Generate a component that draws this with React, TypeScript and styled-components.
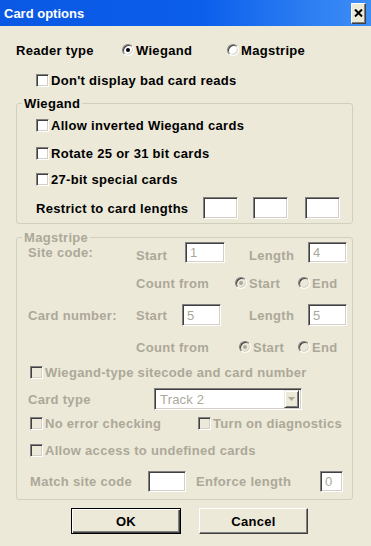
import React from 'react';
import styled, { createGlobalStyle } from 'styled-components';

const Global = createGlobalStyle`
  html, body { margin: 0; padding: 0; background: #ECE9D8; }
  * { box-sizing: border-box; }
`;

const FACE = '#ECE9D8';
const GRAY = '#ACA899';

const Dialog = styled.div`
  width: 371px;
  height: 546px;
  background: ${FACE};
  display: flex;
  flex-direction: column;
  overflow: hidden;
  font: bold 13px "Liberation Sans", Arial, sans-serif;
  letter-spacing: 0.3px;
  color: #000;
`;

const TitleBar = styled.div`
  height: 26px;
  flex: none;
  display: flex;
  align-items: center;
  justify-content: space-between;
  padding: 0 5px 0 4px;
  background: linear-gradient(90deg, #0A58E4 0%, #0C5FEB 55%, #2F80F2 85%, #3D8EF6 100%);
  color: #fff;
  letter-spacing: 0;
`;

const Title = styled.span`
  font: bold 13px "Liberation Sans", Arial, sans-serif;
`;

const CloseBtn = styled.div`
  width: 15px;
  height: 21px;
  background: ${FACE};
  border: 1px solid;
  border-color: #fff #404040 #404040 #fff;
  box-shadow: inset -1px -1px #808080;
  display: flex;
  align-items: center;
  justify-content: center;
`;

const Body = styled.div`
  display: flex;
  flex-direction: column;
`;

const Row = styled.div<{ $h: number; $mt?: number; $pl?: number }>`
  display: flex;
  align-items: center;
  height: ${p => p.$h}px;
  margin-top: ${p => p.$mt ?? 0}px;
  padding-left: ${p => p.$pl ?? 0}px;
  flex: none;
`;

const Cell = styled.div<{ $w?: number; $dim?: boolean; $dy?: number }>`
  display: flex;
  align-items: center;
  flex: none;
  ${p => (p.$w ? `width: ${p.$w}px;` : '')}
  ${p => (p.$dy ? `padding-top: ${p.$dy}px;` : '')}
  color: ${p => (p.$dim ? GRAY : '#000')};
  white-space: nowrap;
`;

const Group = styled.div<{ $mt: number; $h: number; $pl: number; $pt: number }>`
  position: relative;
  margin: ${p => p.$mt}px 0 0 16px;
  width: 337px;
  height: ${p => p.$h}px;
  border: 1px solid #D0D0BF;
  border-radius: 3px;
  padding: ${p => p.$pt}px 0 0 ${p => p.$pl}px;
  display: flex;
  flex-direction: column;
  flex: none;
`;

const Legend = styled.span<{ $dim?: boolean }>`
  position: absolute;
  top: -8px;
  left: 5px;
  padding: 0 2px;
  background: ${FACE};
  color: ${p => (p.$dim ? GRAY : '#000')};
  line-height: 15px;
`;

const Box = styled.span<{ $dim?: boolean }>`
  width: 13px;
  height: 13px;
  flex: none;
  margin-right: 2px;
  border: 1px solid;
  border-color: #808080 #fff #fff #808080;
  box-shadow: inset 1px 1px #404040, inset -1px -1px #D4D0C8;
  background: ${p => (p.$dim ? FACE : '#fff')};
`;

const Round = styled.span<{ $dim?: boolean; $on?: boolean }>`
  width: 12px;
  height: 12px;
  flex: none;
  margin-right: 2px;
  border-radius: 50%;
  border: 1px solid;
  border-color: #808080 #fff #fff #808080;
  box-shadow: inset 1px 1px #404040, inset -1px -1px #D4D0C8;
  background: ${p => (p.$dim ? FACE : '#fff')};
  display: flex;
  align-items: center;
  justify-content: center;
  &::after {
    content: '';
    width: 4px;
    height: 4px;
    border-radius: 50%;
    background: ${p => (p.$on ? (p.$dim ? GRAY : '#000') : 'transparent')};
  }
`;

const Field = styled.div<{ $w: number; $h: number; $dim?: boolean; $ml?: number }>`
  width: ${p => p.$w}px;
  height: ${p => p.$h}px;
  flex: none;
  margin-left: ${p => p.$ml ?? 0}px;
  border: 1px solid;
  border-color: #808080 #fff #fff #808080;
  box-shadow: inset 1px 1px #404040, inset -1px -1px #D4D0C8;
  background: #fff;
  color: ${GRAY};
  font-weight: normal;
  letter-spacing: 0;
  padding-left: 4px;
  display: flex;
  align-items: center;
`;

const Select = styled.div`
  width: 148px;
  height: 22px;
  flex: none;
  border: 1px solid;
  border-color: #808080 #fff #fff #808080;
  box-shadow: inset 1px 1px #404040, inset -1px -1px #D4D0C8;
  background: #fff;
  color: ${GRAY};
  font-weight: normal;
  letter-spacing: 0.2px;
  display: flex;
  align-items: center;
  justify-content: space-between;
  padding: 2px 2px 2px 5px;
`;

const DropBtn = styled.span`
  width: 15px;
  height: 18px;
  background: ${FACE};
  border: 1px solid;
  border-color: ${FACE} #404040 #404040 ${FACE};
  box-shadow: inset 1px 1px #fff, inset -1px -1px #808080;
  display: flex;
  align-items: center;
  justify-content: center;
`;

const ButtonRow = styled.div`
  display: flex;
  margin: 8px 0 0 71px;
  gap: 18px;
`;

const Button = styled.div<{ $def?: boolean; $w: number }>`
  width: ${p => p.$w}px;
  height: 26px;
  background: ${FACE};
  display: flex;
  align-items: center;
  justify-content: center;
  border: 1px solid;
  border-color: ${p => (p.$def ? '#000' : '#fff #404040 #404040 #fff')};
  box-shadow: ${p =>
    p.$def
      ? 'inset 1px 1px #fff, inset -1px -1px #404040, inset -2px -2px #808080'
      : 'inset -1px -1px #808080'};
`;

const Check = ({ label, dim }: { label: string; dim?: boolean }) => (
  <Cell $dim={dim}>
    <Box $dim={dim} />
    {label}
  </Cell>
);

const Radio = ({ label, dim, on, w }: { label: string; dim?: boolean; on?: boolean; w?: number }) => (
  <Cell $dim={dim} $w={w}>
    <Round $dim={dim} $on={on} />
    {label}
  </Cell>
);

export default function App() {
  return (
    <>
      <Global />
      <Dialog>
        <TitleBar>
          <Title>Card options</Title>
          <CloseBtn>
            <svg width="9" height="8" viewBox="0 0 9 8">
              <path d="M1 0.5 L8 7.5 M8 0.5 L1 7.5" stroke="#000" strokeWidth="2" />
            </svg>
          </CloseBtn>
        </TitleBar>
        <Body>
          <Row $h={20} $mt={14} $pl={16}>
            <Cell $w={106}>Reader type</Cell>
            <Radio label="Wiegand" on w={105} />
            <Radio label="Magstripe" />
          </Row>
          <Row $h={20} $mt={10} $pl={36}>
            <Check label="Don't display bad card reads" />
          </Row>

          <Group $mt={13} $h={121} $pl={19} $pt={11}>
            <Legend>Wiegand</Legend>
            <Row $h={20}>
              <Check label="Allow inverted Wiegand cards" />
            </Row>
            <Row $h={20} $mt={8}>
              <Check label="Rotate 25 or 31 bit cards" />
            </Row>
            <Row $h={20} $mt={6}>
              <Check label="27-bit special cards" />
            </Row>
            <Row $h={22} $mt={8}>
              <Cell $w={167}>Restrict to card lengths</Cell>
              <Field $w={35} $h={22} />
              <Field $w={35} $h={22} $ml={15} />
              <Field $w={35} $h={22} $ml={17} />
            </Row>
          </Group>

          <Group $mt={13} $h={263} $pl={11} $pt={4}>
            <Legend $dim>Magstripe</Legend>
            <Row $h={21}>
              <Cell $w={108} $dim>Site code:</Cell>
              <Cell $w={49} $dim $dy={6}>Start</Cell>
              <Field $w={40} $h={21}>1</Field>
              <Cell $w={59} $dim $dy={6} style={{ marginLeft: 24 }}>Length</Cell>
              <Field $w={39} $h={21}>4</Field>
            </Row>
            <Row $h={20} $mt={10} $pl={108}>
              <Cell $w={99} $dim>Count from</Cell>
              <Radio label="Start" dim on w={63} />
              <Radio label="End" dim />
            </Row>
            <Row $h={22} $mt={11}>
              <Cell $w={108} $dim>Card number:</Cell>
              <Cell $w={46} $dim>Start</Cell>
              <Field $w={39} $h={22}>5</Field>
              <Cell $w={59} $dim style={{ marginLeft: 28 }}>Length</Cell>
              <Field $w={39} $h={22}>5</Field>
            </Row>
            <Row $h={20} $mt={11} $pl={108}>
              <Cell $w={103} $dim>Count from</Cell>
              <Radio label="Start" dim on w={59} />
              <Radio label="End" dim />
            </Row>
            <Row $h={20} $mt={5} $pl={2}>
              <Check label="Wiegand-type sitecode and card number" dim />
            </Row>
            <Row $h={22} $mt={6}>
              <Cell $w={126} $dim>Card type</Cell>
              <Select>
                Track 2
                <DropBtn>
                  <svg width="7" height="4" viewBox="0 0 7 4">
                    <path d="M0 0 H7 L3.5 4 Z" fill={GRAY} />
                  </svg>
                </DropBtn>
              </Select>
            </Row>
            <Row $h={20} $mt={3} $pl={2}>
              <Cell $w={168}>
                <Check label="No error checking" dim />
              </Cell>
              <Check label="Turn on diagnostics" dim />
            </Row>
            <Row $h={20} $mt={7} $pl={2}>
              <Check label="Allow access to undefined cards" dim />
            </Row>
            <Row $h={20} $mt={11} $pl={2}>
              <Cell $w={118} $dim>Match site code</Cell>
              <Field $w={38} $h={21} />
              <Cell $w={124} $dim style={{ marginLeft: 10 }}>Enforce length</Cell>
              <Field $w={23} $h={21}>0</Field>
            </Row>
          </Group>

          <ButtonRow>
            <Button $def $w={110}>OK</Button>
            <Button $w={109}>Cancel</Button>
          </ButtonRow>
        </Body>
      </Dialog>
    </>
  );
}
